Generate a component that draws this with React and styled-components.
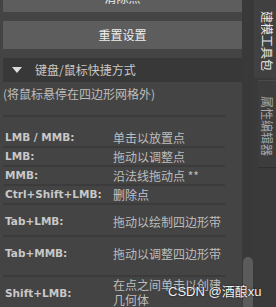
import React from 'react';
import styled, { createGlobalStyle } from 'styled-components';

const GlobalStyle = createGlobalStyle`
  html, body {
    margin: 0;
    padding: 0;
    background: #444444;
  }
  body {
    font-family: "Noto Sans CJK SC", "DejaVu Sans", sans-serif;
  }
`;

const hotkeys = [
  { id: 1, key: 'LMB / MMB:', desc: ['单击以放置点'], h: 19, pt: 0 },
  { id: 2, key: 'LMB:', desc: ['拖动以调整点'], h: 19, pt: 0 },
  { id: 3, key: 'MMB:', desc: ['沿法线拖动点 **'], h: 19, pt: 0 },
  { id: 4, key: 'Ctrl+Shift+LMB:', desc: ['删除点'], h: 19, pt: 0, accent: true },
  { id: 5, key: 'Tab+LMB:', desc: ['拖动以绘制四边形带'], h: 32, pt: 8 },
  { id: 6, key: 'Tab+MMB:', desc: ['拖动以调整四边形带'], h: 40, pt: 8 },
  { id: 7, key: 'Shift+LMB:', desc: ['在点之间单击以创建', '几何体'], h: 34, pt: 0, wrap: true },
];

function App() {
  return (
    <Window>
      <GlobalStyle />
      <Panel>
        <Content>
          <ToolButton>清除点</ToolButton>
          <ToolButton>重置设置</ToolButton>
          <FrameHeader>
            <Arrow />
            <FrameTitle>键盘/鼠标快捷方式</FrameTitle>
          </FrameHeader>
          <Hint>(将鼠标悬停在四边形网格外)</Hint>
          <Separator />
          <Spacer />
          {hotkeys.map(row => (
            <KeyRow key={row.id} $h={row.h} $pt={row.pt}>
              <KeyLabel $center={row.wrap}>{row.key}</KeyLabel>
              <KeyDesc $accent={row.accent} $wrap={row.wrap}>
                {row.desc.map(line => (
                  <div key={line}>{line}</div>
                ))}
              </KeyDesc>
            </KeyRow>
          ))}
        </Content>
      </Panel>
      <ScrollTrack>
        <Thumb />
      </ScrollTrack>
      <TabBar>
        <Tab $active>建模工具包</Tab>
        <Tab>属性编辑器</Tab>
      </TabBar>
      <Watermark>CSDN @酒酿xu</Watermark>
    </Window>
  );
}

export default App;

const Window = styled.div`
  position: relative;
  display: flex;
  width: 276px;
  height: 307px;
  overflow: hidden;
  background: #444444;
`;

const Panel = styled.div`
  flex: 1;
  overflow: hidden;
`;

// panel is scrolled down a little, so the first button is cut off
const Content = styled.div`
  display: flex;
  flex-direction: column;
  margin-top: -16px;
  padding-left: 3px;
`;

const ToolButton = styled.div`
  height: 28px;
  margin-bottom: 9px;
  background: #5d5d5d;
  color: #eeeeee;
  font-size: 12px;
  line-height: 28px;
  text-align: center;
`;

const FrameHeader = styled.div`
  display: flex;
  align-items: center;
  height: 24px;
  background: #383838;
`;

const Arrow = styled.div`
  width: 0;
  height: 0;
  margin: 0 13px 0 9px;
  border-left: 5.5px solid transparent;
  border-right: 5.5px solid transparent;
  border-top: 6px solid #dddddd;
`;

const FrameTitle = styled.div`
  color: #c8c8c8;
  font-size: 12px;
  line-height: 24px;
`;

const Hint = styled.div`
  margin-top: 4px;
  color: #bdbdbd;
  font-size: 12px;
  line-height: 16px;
  white-space: nowrap;
`;

const Separator = styled.div`
  height: 2px;
  margin: 13px 17px 0 0;
  background: #3b3b3b;
`;

const Spacer = styled.div`
  height: 12px;
`;

const KeyRow = styled.div`
  display: grid;
  grid-template-columns: 108px 1fr;
  align-items: start;
  height: ${p => p.$h}px;
  padding: ${p => p.$pt}px 0 0 2px;
  box-sizing: border-box;
  margin-right: 17px;
  border-bottom: 2px solid #3b3b3b;
`;

const KeyLabel = styled.div`
  align-self: ${p => (p.$center ? 'center' : 'start')};
  color: #c8c8c8;
  font-family: "DejaVu Sans", sans-serif;
  font-weight: bold;
  font-size: 10.5px;
  line-height: 17px;
  white-space: nowrap;
`;

const KeyDesc = styled.div`
  color: ${p => (p.$accent ? '#c2c2d6' : '#bdbdbd')};
  font-size: 12px;
  line-height: ${p => (p.$wrap ? 15 : 17)}px;
  white-space: nowrap;
`;

const ScrollTrack = styled.div`
  display: flex;
  flex-direction: column;
  justify-content: flex-end;
  width: 12px;
  background: #393939;
`;

const Thumb = styled.div`
  height: 50px;
  margin: 0 1px;
  border-radius: 5px 5px 0 0;
  background: #5b5b5b;
`;

const TabBar = styled.div`
  display: flex;
  flex-direction: column;
  width: 22px;
  background: #3a3a3a;
`;

const Tab = styled.div`
  display: flex;
  justify-content: center;
  height: ${p => (p.$active ? 78 : 88)}px;
  margin: ${p => (p.$active ? '0' : '2px 0 0 4px')};
  padding-top: 4px;
  box-sizing: border-box;
  background: ${p => (p.$active ? '#404040' : '#3d3d3d')};
  border-top: ${p => (p.$active ? 'none' : '1px solid #4a4a4a')};
  border-bottom: ${p => (p.$active ? 'none' : '1px solid #2f2f2f')};
  color: ${p => (p.$active ? '#e8e8e8' : '#a8a8a8')};
  font-size: 12px;
  writing-mode: vertical-rl;
  text-orientation: sideways;
`;

const Watermark = styled.div`
  position: absolute;
  left: 168px;
  top: 281px;
  color: #f2f2f2;
  font-family: "Liberation Sans", "Noto Sans CJK SC", sans-serif;
  font-size: 13px;
  text-shadow: 0 0 2px #222, 0 0 1px #222;
  white-space: nowrap;
`;
